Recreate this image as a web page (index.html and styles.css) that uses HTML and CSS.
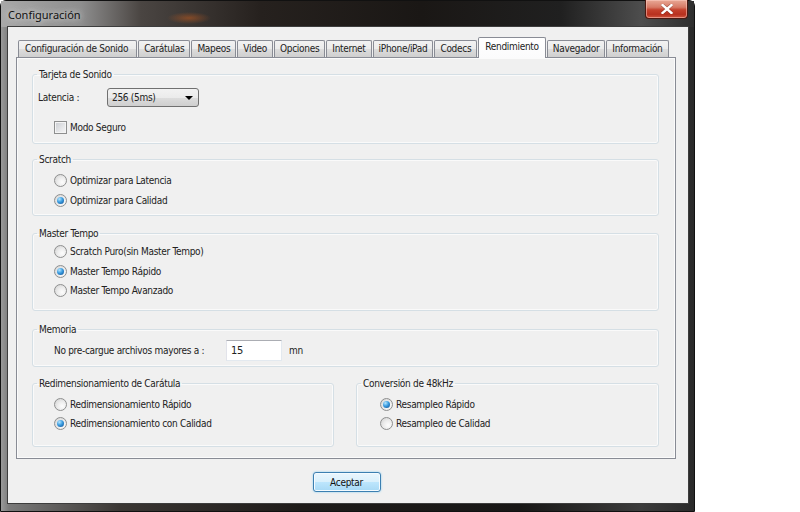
FILE: index.html
```html
<!DOCTYPE html>
<html lang="es">
<head>
    <meta charset="UTF-8">
    <title>Configuración</title>
    <link rel="stylesheet" href="styles.css">
</head>
<body>

<div class="window">
    <!-- Title bar -->
    <div class="titlebar">
        <span class="title">Configuración</span>
        <div class="close-button">
            <svg width="12" height="10" viewBox="0 0 12 10">
                <path d="M1.5 1 L10.5 9 M10.5 1 L1.5 9" stroke="#5a1a12" stroke-width="3.4" stroke-linecap="square" opacity="0.5"/>
                <path d="M1.5 1 L10.5 9 M10.5 1 L1.5 9" stroke="#fff" stroke-width="2.4" stroke-linecap="square"/>
            </svg>
        </div>
    </div>

    <div class="client">
        <!-- Tabs -->
        <div class="tabs">
            <div class="tab">Configuración de Sonido</div>
            <div class="tab">Carátulas</div>
            <div class="tab">Mapeos</div>
            <div class="tab">Video</div>
            <div class="tab">Opciones</div>
            <div class="tab">Internet</div>
            <div class="tab">iPhone/iPad</div>
            <div class="tab">Codecs</div>
            <div class="tab active">Rendimiento</div>
            <div class="tab">Navegador</div>
            <div class="tab">Información</div>
        </div>

        <div class="panel">
            <fieldset class="group group-card">
                <legend>Tarjeta de Sonido</legend>
                <div class="row">
                    <span class="field-label">Latencia :</span>
                    <div class="combo">
                        <span>256 (5ms)</span>
                        <span class="combo-arrow"></span>
                    </div>
                </div>
                <div class="row row-check">
                    <span class="checkbox"></span>
                    <span>Modo Seguro</span>
                </div>
            </fieldset>

            <fieldset class="group group-scratch">
                <legend>Scratch</legend>
                <div class="row option"><span class="radio"></span>Optimizar para Latencia</div>
                <div class="row option"><span class="radio checked"></span>Optimizar para Calidad</div>
            </fieldset>

            <fieldset class="group group-tempo">
                <legend>Master Tempo</legend>
                <div class="row option"><span class="radio"></span>Scratch Puro(sin Master Tempo)</div>
                <div class="row option"><span class="radio checked"></span>Master Tempo Rápido</div>
                <div class="row option"><span class="radio"></span>Master Tempo Avanzado</div>
            </fieldset>

            <fieldset class="group group-memory">
                <legend>Memoria</legend>
                <div class="row option memory-row">
                    <span class="memory-label">No pre-cargue archivos mayores a :</span>
                    <div class="textbox">15</div>
                    <span class="unit">mn</span>
                </div>
            </fieldset>

            <div class="group-pair">
                <fieldset class="group group-resize">
                    <legend>Redimensionamiento de Carátula</legend>
                    <div class="row option"><span class="radio"></span>Redimensionamiento Rápido</div>
                    <div class="row option"><span class="radio checked"></span>Redimensionamiento con Calidad</div>
                </fieldset>
                <fieldset class="group group-resample">
                    <legend>Conversión de 48kHz</legend>
                    <div class="row option"><span class="radio checked"></span>Resampleo Rápido</div>
                    <div class="row option"><span class="radio"></span>Resampleo de Calidad</div>
                </fieldset>
            </div>
        </div>

        <div class="footer">
            <button class="ok-button">Aceptar</button>
        </div>
    </div>
</div>

</body>
</html>
```

FILE: styles.css
```css
* {
    box-sizing: border-box;
}

body {
    margin: 0;
    background-color: #fff;
    font-family: "DejaVu Sans Condensed", "Liberation Sans", sans-serif;
    font-size: 10px;
    letter-spacing: -0.3px;
    color: #222;
}

/* Window frame */
.window {
    width: 695px;
    height: 512px;
    display: flex;
    flex-direction: column;
    border: 1px solid #111;
    border-radius: 6px 6px 0 0;
    background: linear-gradient(to right, #9a9a9a 0, #7a7a7a 8px, #3a3633 120px, #1e1b19 300px, #181716 520px, #3c3c3c 640px, #2a2a2a 100%);
}

.titlebar {
    height: 26px;
    display: flex;
    align-items: flex-start;
    background:
        radial-gradient(ellipse 22px 6px at 188px 17px, rgba(190, 90, 30, 0.55), transparent),
        linear-gradient(to right, #a8a8a8 0, #8e8e8e 80px, #4a4542 140px, #26211e 260px, #1a1715 420px, #202020 560px, #4d4d4d 640px, #2e2e2e 100%);
}

.title {
    padding: 6px 0 0 7px;
    font-family: "Noto Sans", sans-serif;
    font-size: 11px;
    letter-spacing: 0;
    color: #111;
    text-shadow: 0 0 6px rgba(255, 255, 255, 0.8), 0 0 12px rgba(230, 230, 230, 0.6);
}

.close-button {
    margin: -1px 6px 0 auto;
    width: 43px;
    height: 19px;
    display: flex;
    align-items: center;
    justify-content: center;
    border: 1px solid #4a1810;
    border-top: none;
    border-radius: 0 0 4px 4px;
    background: linear-gradient(#e9a996 0, #d77a66 40%, #c4412c 55%, #b8311f 80%, #d0553e 100%);
    box-shadow: inset 0 0 0 1px rgba(255, 210, 200, 0.5);
}

/* Client area */
.client {
    flex: 1;
    margin: 0 6px 8px 7px;
    padding-top: 10px;
    background-color: #f0f0f0;
    box-shadow: 0 0 0 1px #3d3d3d;
}

/* Tabs */
.tabs {
    display: flex;
    align-items: flex-end;
    height: 20px;
    margin-left: 10px;
    position: relative;
    z-index: 1;
}

.tab {
    height: 17px;
    padding: 0 5px;
    margin-right: 1px;
    line-height: 15px;
    white-space: nowrap;
    border: 1px solid #898c95;
    border-bottom: none;
    border-radius: 2px 2px 0 0;
    background: linear-gradient(#f2f2f2 0, #ebebeb 50%, #dddddd 50%, #cfcfcf 100%);
}

.tab:first-child {
    padding: 0 8px 0 6px;
}

.tab.active {
    height: 21px;
    padding: 0 6px;
    margin-bottom: -1px;
    line-height: 18px;
    background: linear-gradient(#fff, #fbfbfc);
}

/* Tab page */
.panel {
    width: 660px;
    height: 402px;
    margin-left: 8px;
    padding: 10px 16px 0 15px;
    display: flex;
    flex-direction: column;
    gap: 9px;
    border: 1px solid #898c95;
    background-color: #f0f0f0;
    box-shadow: inset 0 0 0 1px #fbfbfb;
}

/* Group boxes */
.group {
    margin: 0;
    padding: 0;
    min-width: 0;
    border: 1px solid #d5dfe5;
    border-radius: 3px;
    box-shadow: inset 0 0 0 1px #fafafa;
}

.group legend {
    margin-left: 4px;
    padding: 0 2px;
    line-height: 13px;
}

.row {
    display: flex;
    align-items: center;
    height: 19.5px;
    white-space: nowrap;
}

.option {
    padding-left: 21px;
}

.group-card {
    padding: 7px 0 6px;
}

.group-scratch {
    padding: 5px 0 5px;
}

.group-tempo {
    margin-top: 2px;
    padding: 2px 0 9px;
}

.group-memory {
    margin-top: 3px;
    padding: 4px 0 5px;
}

.memory-row {
    height: 21px;
}

.group-pair {
    display: flex;
    gap: 22px;
    margin-top: 1px;
}

.group-resize {
    width: 302px;
    padding: 5px 0 12px;
}

.group-resample {
    flex: 1;
    padding: 5px 0 12px;
}

.group-resample .option {
    padding-left: 23px;
}

/* Controls */
.field-label {
    width: 74px;
    padding-left: 5px;
}

.combo {
    width: 92px;
    height: 19px;
    padding: 0 4px;
    display: flex;
    align-items: center;
    justify-content: space-between;
    border: 1px solid #707070;
    border-radius: 3px;
    background: linear-gradient(#f2f2f2 0, #ebebeb 50%, #dddddd 50%, #cfcfcf 100%);
}

.combo-arrow {
    width: 0;
    height: 0;
    margin-right: 1px;
    border-left: 4px solid transparent;
    border-right: 4px solid transparent;
    border-top: 4px solid #000;
}

.row-check {
    margin-top: 10px;
    padding-left: 21px;
}

.checkbox {
    width: 13px;
    height: 13px;
    margin-right: 3px;
    border: 1px solid #8e8f8f;
    background: linear-gradient(135deg, #c9ccd1 0, #e6e7e9 60%, #f6f6f6 100%);
    box-shadow: inset 0 0 0 1px #f4f4f4;
}

.radio {
    position: relative;
    width: 13px;
    height: 13px;
    margin-right: 3px;
    border: 1px solid #8e8f8f;
    border-radius: 50%;
    background: radial-gradient(circle at 65% 65%, #fdfdfd 0, #ececec 45%, #cdcdcd 100%);
}

.radio.checked::after {
    content: "";
    position: absolute;
    top: 2px;
    left: 2px;
    width: 7px;
    height: 7px;
    border-radius: 50%;
    background: radial-gradient(circle at 35% 30%, #b5e6ff 0, #3a9ce0 45%, #0d4a8c 100%);
}

.memory-label {
    width: 172px;
}

.textbox {
    width: 56px;
    height: 21px;
    padding: 3px 0 0 4px;
    border: 1px solid;
    border-color: #abadb3 #e3e9ef #e3e9ef #e2e3ea;
    background-color: #fff;
    font-size: 11px;
}

.unit {
    margin-left: 7px;
}

/* Bottom button */
.footer {
    display: flex;
    justify-content: center;
    padding: 13px 3px 0 0;
}

.ok-button {
    width: 68px;
    height: 20px;
    padding: 0;
    font-family: inherit;
    font-size: 10px;
    letter-spacing: -0.3px;
    color: #111;
    border: 1px solid #3c7fb1;
    border-radius: 3px;
    background: linear-gradient(#eaf6fd 0, #d9f0fc 50%, #bee6fd 50%, #a7d9f5 100%);
    box-shadow: inset 0 0 0 1px #f4fbff, 0 0 2px #7cc8f0;
}
```
